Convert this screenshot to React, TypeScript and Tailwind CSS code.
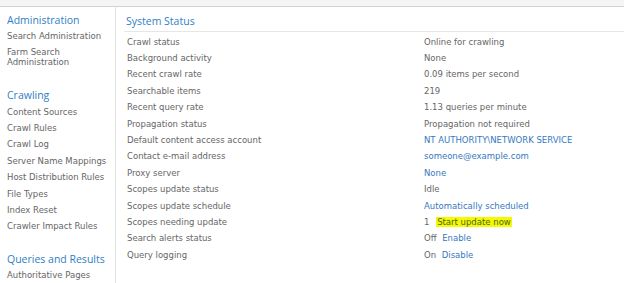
const nav = [
  {
    title: 'Administration',
    items: ['Search Administration', 'Farm Search Administration'],
  },
  {
    title: 'Crawling',
    items: [
      'Content Sources',
      'Crawl Rules',
      'Crawl Log',
      'Server Name Mappings',
      'Host Distribution Rules',
      'File Types',
      'Index Reset',
      'Crawler Impact Rules',
    ],
  },
  {
    title: 'Queries and Results',
    items: ['Authoritative Pages'],
  },
];

type Row = { label: string; value: React.ReactNode };

const link = 'text-[#3679bf]';

const rows: Row[] = [
  { label: 'Crawl status', value: 'Online for crawling' },
  { label: 'Background activity', value: 'None' },
  { label: 'Recent crawl rate', value: '0.09 items per second' },
  { label: 'Searchable items', value: '219' },
  { label: 'Recent query rate', value: '1.13 queries per minute' },
  { label: 'Propagation status', value: 'Propagation not required' },
  { label: 'Default content access account', value: <span className={link}>NT AUTHORITY\NETWORK SERVICE</span> },
  { label: 'Contact e-mail address', value: <span className={link}>someone@example.com</span> },
  { label: 'Proxy server', value: <span className={link}>None</span> },
  { label: 'Scopes update status', value: 'Idle' },
  { label: 'Scopes update schedule', value: <span className={link}>Automatically scheduled</span> },
  {
    label: 'Scopes needing update',
    value: (
      <>
        1 <span className="ml-[4px] bg-[#f8f800] px-[1px] text-[#3f6a2a]">Start update now</span>
      </>
    ),
  },
  {
    label: 'Search alerts status',
    value: (
      <>
        Off <span className={`${link} ml-[3px]`}>Enable</span>
      </>
    ),
  },
  {
    label: 'Query logging',
    value: (
      <>
        On <span className={`${link} ml-[3px]`}>Disable</span>
      </>
    ),
  },
];

const body = "font-['DejaVu_Sans',Verdana,sans-serif] text-[8.5px]";
const heading = "font-['Open_Sans',sans-serif] text-[10.5px] text-[#2f80c4]";

export default function App() {
  return (
    <div className="flex h-[283px] w-[624px] flex-col overflow-hidden bg-white">
      <div className="h-[7px] shrink-0 border-b border-[#d2d2d2] bg-[#f5f5f5]" />
      <div className="flex flex-1">
        <aside className="w-[116px] shrink-0 border-r border-[#e4e4e4] pl-[7px] pt-[4.5px]">
          {nav.map((group) => (
            <div key={group.title} className="mb-[16.4px]">
              <div className={`${heading} leading-[16.4px]`}>{group.title}</div>
              {group.items.map((item) => (
                <div key={item} className={`${body} py-[3.2px] pr-[6px] leading-[10px] text-[#666]`}>
                  {item}
                </div>
              ))}
            </div>
          ))}
        </aside>
        <main className="flex-1 pl-[8px] pt-[6px]">
          <div className="border-b border-[#e6e6e6] pb-[2px] pl-[2px]">
            <div className={`${heading} leading-[16px]`}>System Status</div>
          </div>
          <div className={`${body} mt-[1.6px] grid grid-cols-[297px_1fr] pl-[3px] text-[#666]`}>
            {rows.map((r) => (
              <div key={r.label} className="contents">
                <div className="leading-[16.4px]">{r.label}</div>
                <div className="leading-[16.4px]">{r.value}</div>
              </div>
            ))}
          </div>
        </main>
      </div>
    </div>
  );
}
